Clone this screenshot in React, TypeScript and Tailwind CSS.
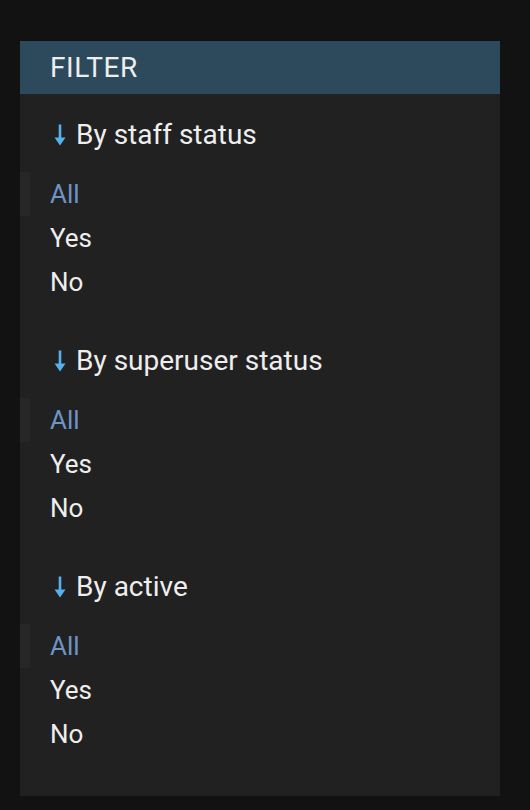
import React from "react";

const sections = [
  { title: "By staff status" },
  { title: "By superuser status" },
  { title: "By active" },
];

function Arrow() {
  return (
    <svg width="14" height="22" viewBox="0 0 14 22" className="ml-[33px] shrink-0">
      <rect x="5.7" y="0.5" width="2.6" height="15" fill="#56b0ec" />
      <polygon points="1.5,13.5 12.5,13.5 7,21.5" fill="#56b0ec" />
    </svg>
  );
}

export default function App() {
  return (
    <div
      className="min-h-[810px] bg-[#121212] pt-[41px] pl-[20px]"
      style={{ fontFamily: "Roboto, 'Noto Sans', sans-serif" }}
    >
      <div className="w-[480px] bg-[#212121] pb-[24px]">
        <h2 className="h-[53px] bg-[#2d4a5c] pl-[30px] text-[28px] leading-[53px] tracking-[0.6px] text-[#eeeeee] font-normal">
          FILTER
        </h2>
        {sections.map((s, i) => (
          <div key={i} className="pt-[21px] pb-[16px]">
            <h3 className="flex h-[40px] items-center text-[28px] leading-[40px] font-normal text-[#eeeeee]">
              <Arrow />
              <span className="ml-[9px]">{s.title}</span>
            </h3>
            <ul className="pt-[17px] text-[26px] leading-[44px]">
              <li className="h-[44px] border-l-[10px] border-[#272727] pl-[20px] text-[#6f94c6]">All</li>
              <li className="h-[44px] pl-[30px] text-[#eeeeee]">Yes</li>
              <li className="h-[44px] pl-[30px] text-[#eeeeee]">No</li>
            </ul>
          </div>
        ))}
      </div>
    </div>
  );
}
